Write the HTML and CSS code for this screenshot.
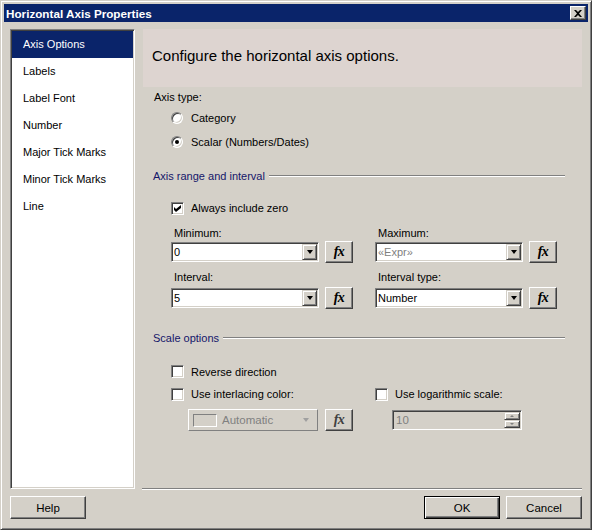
FILE: index.html
```html
<!DOCTYPE html>
<html>
<head>
<meta charset="utf-8">
<link rel="stylesheet" href="styles.css">
</head>
<body>
<div class="window">
  <div class="titlebar">
    <span class="title">Horizontal Axis Properties</span>
    <span class="close raised"><svg width="8" height="7" viewBox="0 0 8 7"><path d="M0 0h2l2 2 2-2h2L5 3.5 8 7H6L4 5 2 7H0l3-3.5z" fill="#000"/></svg></span>
  </div>
  <div class="body">
    <div class="main">
      <ul class="nav">
        <li class="selected">Axis Options</li>
        <li>Labels</li>
        <li>Label Font</li>
        <li>Number</li>
        <li>Major Tick Marks</li>
        <li>Minor Tick Marks</li>
        <li>Line</li>
      </ul>
      <div class="panel">
        <div class="header">Configure the horizontal axis options.</div>
        <div class="row axis-type">Axis type:</div>
        <div class="row opt r1"><span class="radio"></span><span class="lbl">Category</span></div>
        <div class="row opt r2"><span class="radio on"><span class="dot"></span></span><span class="lbl">Scalar (Numbers/Dates)</span></div>
        <div class="section s1"><span>Axis range and interval</span><span class="rule"></span></div>
        <div class="row opt c1"><span class="check"><svg width="7" height="7" viewBox="0 0 7 7"><path d="M0 2l2 2 5-4v3l-5 4-2-2z" fill="#000"/></svg></span><span class="lbl">Always include zero</span></div>
        <div class="fields">
          <div class="field">
            <div class="flabel">Minimum:</div>
            <div class="ctrl"><div class="combo"><span class="val">0</span><span class="ddbtn"><i class="tri"></i></span></div><span class="fx raised">fx</span></div>
          </div>
          <div class="field">
            <div class="flabel">Maximum:</div>
            <div class="ctrl"><div class="combo"><span class="val gray">«Expr»</span><span class="ddbtn"><i class="tri"></i></span></div><span class="fx raised">fx</span></div>
          </div>
          <div class="field second">
            <div class="flabel">Interval:</div>
            <div class="ctrl"><div class="combo"><span class="val">5</span><span class="ddbtn"><i class="tri"></i></span></div><span class="fx raised">fx</span></div>
          </div>
          <div class="field second">
            <div class="flabel">Interval type:</div>
            <div class="ctrl"><div class="combo"><span class="val">Number</span><span class="ddbtn"><i class="tri"></i></span></div><span class="fx raised">fx</span></div>
          </div>
        </div>
        <div class="section s2"><span>Scale options</span><span class="rule"></span></div>
        <div class="row opt c2"><span class="check"></span><span class="lbl">Reverse direction</span></div>
        <div class="pair c3">
          <div class="opt"><span class="check"></span><span class="lbl">Use interlacing color:</span></div>
          <div class="opt"><span class="check"></span><span class="lbl">Use logarithmic scale:</span></div>
        </div>
        <div class="pair c4">
          <div class="sub">
            <div class="dcombo"><span class="swatch"></span><span class="dval">Automatic</span><i class="tri gtri"></i></div>
            <span class="fx raised dis">fx</span>
          </div>
          <div class="sub">
            <div class="spin"><span class="dval">10</span><span class="spinbtns"><span class="sb"><i class="up"></i></span><span class="sb"><i class="down"></i></span></span></div>
          </div>
        </div>
      </div>
    </div>
    <div class="footer">
      <span class="btn raised">Help</span>
      <span class="btn default ok">OK</span>
      <span class="btn raised">Cancel</span>
    </div>
  </div>
</div>
</body>
</html>
```
FILE: styles.css
```css
* { box-sizing: border-box; margin: 0; padding: 0; }
body { margin: 0; background: #d4d0c8; font-family: "Liberation Sans", Arial, sans-serif; font-size: 11px; color: #000; }
.window { width: 592px; height: 530px; border: 1px solid; border-color: #d4d0c8 #404040 #404040 #d4d0c8; box-shadow: inset 1px 1px #fff, inset -1px -1px #808080; padding: 3px; display: flex; flex-direction: column; background: #d4d0c8; }
.titlebar { height: 18px; flex: none; background: #0a246a; color: #fff; display: flex; align-items: center; justify-content: space-between; padding: 0 2px; }
.title { font-weight: bold; font-size: 11.7px; padding-left: 0; }
.raised { background: #d4d0c8; border: 1px solid; border-color: #fff #404040 #404040 #fff; box-shadow: inset -1px -1px #808080; }
.close { width: 16px; height: 14px; display: flex; align-items: center; justify-content: center; }
.body { flex: 1; display: flex; flex-direction: column; padding: 7px 6px 0 6px; }
.main { display: flex; gap: 7px; height: 460px; }
.nav { list-style: none; width: 125px; height: 460px; background: #fff; border: 1px solid; border-color: #808080 #fff #fff #808080; box-shadow: inset 1px 1px #404040, inset -1px -1px #d4d0c8; padding: 1px; }
.nav li { height: 27px; line-height: 27px; padding-left: 11px; font-size: 11px; }
.nav li.selected { background: #0a246a; color: #fff; }
.panel { width: 440px; height: 460px; border-bottom: 1px solid #808080; box-shadow: 0 1px 0 #fff; }
.header { margin-left: 1px; height: 58px; background: #ddd4d0; font-size: 15px; padding-left: 9px; display: flex; align-items: center; padding-bottom: 5px; }
.row { display: flex; align-items: center; }
.axis-type { height: 19px; padding-left: 12px; }
.opt { display: flex; align-items: center; }
.row.opt { padding-left: 29px; }
.r1 { height: 24px; }
.r2 { height: 23px; }
.radio { width: 12px; height: 12px; border-radius: 50%; background: #fff; border: 1px solid; border-color: #808080 #fff #fff #808080; box-shadow: inset 1px 1px #404040, inset -1px -1px #d4d0c8; display: flex; align-items: center; justify-content: center; flex: none; }
.dot { width: 4px; height: 4px; border-radius: 50%; background: #000; }
.radio + .lbl { margin-left: 8px; }
.check { width: 13px; height: 13px; background: #fff; border: 1px solid; border-color: #808080 #fff #fff #808080; box-shadow: inset 1px 1px #404040, inset -1px -1px #d4d0c8; display: flex; align-items: center; justify-content: center; flex: none; }
.check + .lbl { margin-left: 7px; }
.section { display: flex; align-items: center; height: 20px; padding-left: 11px; color: #15166a; }
.rule { flex: 1; height: 2px; border-top: 1px solid #808080; border-bottom: 1px solid #fff; margin-left: 4px; margin-right: 17px; }
.s1 { margin-top: 13px; }
.c1 { margin-top: 12px; height: 20px; }
.fields { display: grid; grid-template-columns: 204px 1fr; padding-left: 29px; margin-top: 9px; }
.field { display: flex; flex-direction: column; }
.field.second { margin-top: 8px; }
.flabel { height: 13px; line-height: 13px; padding-left: 3px; margin-bottom: 1px; }
.field.second .flabel { margin-bottom: 3px; }
.ctrl { display: flex; align-items: center; height: 22px; gap: 6px; }
.combo { width: 148px; height: 20px; background: #fff; border: 1px solid; border-color: #808080 #fff #fff #808080; box-shadow: inset 1px 1px #404040, inset -1px -1px #d4d0c8; display: flex; align-items: center; padding: 1px; }
.val { flex: 1; padding-left: 1px; }
.gray { color: #808080; }
.ddbtn { width: 15px; height: 16px; background: #d4d0c8; border: 1px solid; border-color: #d4d0c8 #404040 #404040 #d4d0c8; box-shadow: inset 1px 1px #fff, inset -1px -1px #808080; display: flex; align-items: center; justify-content: center; }
.tri { display: block; width: 0; height: 0; border-left: 3.5px solid transparent; border-right: 3.5px solid transparent; border-top: 4px solid #000; }
.gtri { border-top-color: #a0a0a0; margin-right: 8px; }
.fx { width: 28px; height: 22px; display: flex; align-items: center; justify-content: center; font-family: "Liberation Serif", "Times New Roman", serif; font-weight: bold; font-style: italic; font-size: 14px; letter-spacing: -0.5px; }
.fx.dis { color: #404040; }
.s2 { margin-top: 19px; }
.c2 { margin-top: 14px; height: 19px; }
.pair { display: grid; grid-template-columns: 204px 1fr; padding-left: 29px; }
.c3 { margin-top: 4px; height: 18px; align-items: center; }
.c4 { margin-top: 6px; height: 22px; }
.sub { display: flex; align-items: center; gap: 7px; padding-left: 17px; }
.dcombo { width: 130px; height: 22px; background: #d4d0c8; border: 1px solid; border-color: #fff #808080 #808080 #fff; box-shadow: inset 1px 1px #d4d0c8, inset -1px -1px #d4d0c8; display: flex; align-items: center; padding-left: 4px; }
.swatch { width: 24px; height: 13px; border: 1px solid; border-color: #808080 #fff #fff #808080; margin-right: 5px; }
.dval { flex: 1; color: #808080; font-size: 11.5px; }
.spin { width: 130px; height: 20px; background: #d4d0c8; border: 1px solid; border-color: #808080 #fff #fff #808080; box-shadow: inset 1px 1px #404040, inset -1px -1px #d4d0c8; display: flex; align-items: center; padding: 1px 1px 1px 3px; }
.spinbtns { width: 16px; height: 16px; display: flex; flex-direction: column; }
.sb { flex: 1; background: #d4d0c8; border: 1px solid; border-color: #d4d0c8 #404040 #404040 #d4d0c8; box-shadow: inset 1px 1px #fff, inset -1px -1px #808080; display: flex; align-items: center; justify-content: center; }
.up { display: block; width: 0; height: 0; border-left: 2px solid transparent; border-right: 2px solid transparent; border-bottom: 2px solid #808080; }
.down { display: block; width: 0; height: 0; border-left: 2px solid transparent; border-right: 2px solid transparent; border-top: 2px solid #808080; }
.footer { display: flex; margin-top: 7px; gap: 6px; }
.btn { width: 76px; height: 23px; display: flex; align-items: center; justify-content: center; font-size: 11.5px; }
.ok { margin-left: auto; }
.default { background: #d4d0c8; border: 1px solid #000; box-shadow: inset 1px 1px #fff, inset -1px -1px #404040, inset -2px -2px #808080; }
```
